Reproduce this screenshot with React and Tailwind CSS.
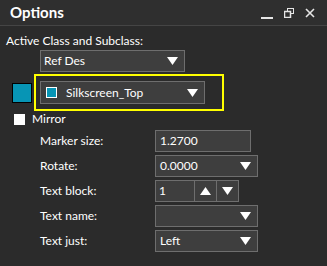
import React from 'react';

function Caret({ className = '' }) {
  return (
    <svg width="11" height="8" viewBox="0 0 11 8" className={className}>
      <path d="M0 0 H11 L5.5 8 Z" fill="#fff" />
    </svg>
  );
}

function Select({ value, width = 'w-[103px]' }) {
  return (
    <div className={`${width} h-[22px] flex items-center justify-between bg-[#3e3e3e] border border-[#6e6e6e] pl-[4px] pr-[6px]`}>
      <span className="text-white">{value}</span>
      <Caret />
    </div>
  );
}

function Row({ label, children }) {
  return (
    <div className="flex items-center h-[22px] mb-[3px]">
      <span className="w-[115px] text-white">{label}</span>
      {children}
    </div>
  );
}

export default function App() {
  return (
    <div className="w-[327px] h-[266px] bg-[#2b2b2b] text-[12px] text-white overflow-hidden" style={{ fontFamily: 'Lato, "Open Sans", sans-serif' }}>
      <div className="h-[26px] flex items-center justify-between bg-[#2f2f2f] border-b border-[#454545] pl-[10px] pr-[12px]">
        <span className="font-bold text-[15px] leading-none">Options</span>
        <div className="flex items-center gap-[11px]">
          <svg width="12" height="12" viewBox="0 0 12 12">
            <rect x="0" y="10" width="12" height="2" fill="#e6e6e6" />
          </svg>
          <svg width="10" height="10" viewBox="0 0 10 10">
            <rect x="3.5" y="0.5" width="6" height="5" fill="none" stroke="#e6e6e6" />
            <rect x="0.5" y="3.5" width="6" height="6" fill="#2f2f2f" stroke="#e6e6e6" strokeWidth="1.5" />
          </svg>
          <svg width="10" height="10" viewBox="0 0 10 10">
            <path d="M1 1 L9 9 M9 1 L1 9" stroke="#e6e6e6" strokeWidth="1.6" />
          </svg>
        </div>
      </div>

      <div className="pt-[7px]">
        <div className="pl-[6px] leading-[16px]">Active Class and Subclass:</div>
        <div className="pl-[40px] mt-[1px]">
          <div className="w-[145px] h-[22px] flex items-center justify-between bg-[#3e3e3e] border border-[#6e6e6e] pl-[3px] pr-[6px]">
            <span>Ref Des</span>
            <Caret />
          </div>
        </div>

        <div className="flex items-center mt-[2px]">
          <div className="ml-[12px] w-[20px] h-[20px] bg-[#0795b5] border border-black" />
          <div className="ml-[2px] w-[190px] h-[37px] border-2 border-[#ffff00] flex items-center pl-[4px]">
            <div className="w-[165px] h-[23px] flex items-center bg-[#3e3e3e] border border-[#6e6e6e] pl-[5px] pr-[6px]">
              <div className="w-[11px] h-[11px] bg-[#0795b5] border border-white" />
              <span className="ml-[9px] flex-1">Silkscreen_Top</span>
              <Caret />
            </div>
          </div>
        </div>

        <div className="flex items-center h-[16px]">
          <div className="ml-[14px] w-[11px] h-[11px] bg-white" />
          <span className="ml-[7px]">Mirror</span>
        </div>

        <div className="pl-[40px] mt-[3px]">
          <Row label="Marker size:">
            <div className="w-[96px] h-[22px] flex items-center bg-[#3e3e3e] border border-[#6e6e6e] pl-[4px]">1.2700</div>
          </Row>
          <Row label="Rotate:">
            <Select value="0.0000" />
          </Row>
          <Row label="Text block:">
            <div className="flex h-[22px] border border-[#6e6e6e] bg-[#3e3e3e]">
              <div className="w-[39px] flex items-center pl-[3px] border-r border-[#6e6e6e]">1</div>
              <div className="w-[22px] flex items-center justify-center border-r border-[#6e6e6e]">
                <svg width="11" height="8" viewBox="0 0 11 8"><path d="M0 8 H11 L5.5 0 Z" fill="#fff" /></svg>
              </div>
              <div className="w-[21px] flex items-center justify-center">
                <Caret />
              </div>
            </div>
          </Row>
          <Row label="Text name:">
            <Select value="" />
          </Row>
          <Row label="Text just:">
            <Select value="Left" />
          </Row>
        </div>
      </div>
    </div>
  );
}
